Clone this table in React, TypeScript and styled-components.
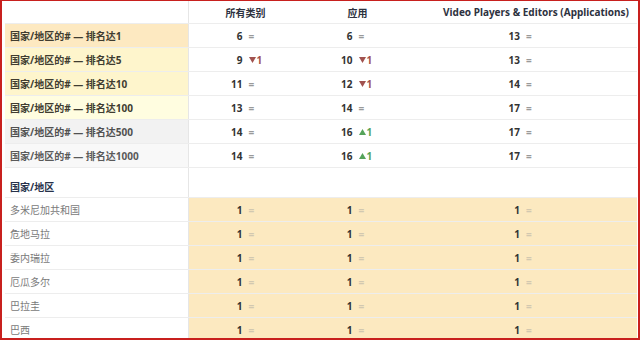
import React from "react";
import styled, { createGlobalStyle } from "styled-components";

const Global = createGlobalStyle`
  html, body { margin: 0; padding: 0; background: #fff; }
  body { font-family: "Noto Sans", "Noto Sans CJK SC", sans-serif; }
`;

const Frame = styled.div`
  box-sizing: border-box;
  width: 640px;
  height: 340px;
  border-style: solid;
  border-color: #c8201e;
  border-width: 1px 2px 2px 2px;
  padding: 0 1px 0 3px;
  overflow: hidden;
  background: #fff;
`;

const Table = styled.div`
  display: flex;
  flex-direction: column;
`;

const Row = styled.div<{ $h?: number }>`
  box-sizing: border-box;
  display: grid;
  grid-template-columns: 184px 113px 107px 1fr;
  height: ${(p) => p.$h ?? 24}px;
  border-bottom: 1px solid #ededed;
`;

const HeadCell = styled.div<{ $shift?: number }>`
  display: flex;
  align-items: center;
  justify-content: center;
  padding-left: ${(p) => p.$shift ?? 0}px;
  font-size: 10px;
  font-weight: 700;
  color: #2d3240;
  white-space: nowrap;
`;

const LabelCell = styled.div<{ $bg?: string; $color?: string; $bold?: boolean }>`
  display: flex;
  align-items: center;
  padding-left: 5px;
  background: ${(p) => p.$bg ?? "#fff"};
  border-right: 1px solid #e6e6e6;
  font-size: 10px;
  font-weight: ${(p) => (p.$bold ? 700 : 400)};
  color: ${(p) => p.$color ?? "#333"};
  white-space: nowrap;
`;

const SectionLabel = styled(LabelCell)`
  padding-bottom: 3px;
  align-items: flex-end;
`;

const ValueCell = styled.div<{ $bg?: string }>`
  display: grid;
  grid-template-columns: 1fr 1fr;
  column-gap: 6px;
  align-items: center;
  background: ${(p) => p.$bg ?? "transparent"};
  font-size: 10px;
`;

const Num = styled.span`
  text-align: right;
  font-weight: 700;
  color: #333;
`;

const Delta = styled.span<{ $tone: "same" | "down" | "up" | "faint" }>`
  display: inline-flex;
  align-items: center;
  gap: 1px;
  font-weight: 700;
  color: ${(p) =>
    p.$tone === "down"
      ? "#a1524f"
      : p.$tone === "up"
      ? "#55a35a"
      : p.$tone === "faint"
      ? "#d2c8b0"
      : "#9a9a9a"};
`;

type D = "=" | "-1" | "+1";

const Tri = ({ up }: { up: boolean }) => (
  <svg width="7" height="6" viewBox="0 0 7 6">
    <path d={up ? "M3.5 0 L7 6 L0 6 Z" : "M0 0 L7 0 L3.5 6 Z"} fill="currentColor" />
  </svg>
);

const Value = ({ n, d, faint, bg }: { n: number; d: D; faint?: boolean; bg?: string }) => {
  const tone = d === "=" ? (faint ? "faint" : "same") : d === "-1" ? "down" : "up";
  return (
    <ValueCell $bg={bg}>
      <Num>{n}</Num>
      <Delta $tone={tone}>
        {d === "=" ? "=" : (
          <>
            <Tri up={d === "+1"} />1
          </>
        )}
      </Delta>
    </ValueCell>
  );
};

const ranks: { label: string; bg: string; color: string; vals: [number, D][] }[] = [
  { label: "国家/地区的# — 排名达1", bg: "#fde9c1", color: "#403c30", vals: [[6, "="], [6, "="], [13, "="]] },
  { label: "国家/地区的# — 排名达5", bg: "#fef5cc", color: "#403c30", vals: [[9, "-1"], [10, "-1"], [13, "="]] },
  { label: "国家/地区的# — 排名达10", bg: "#fef5cc", color: "#403c30", vals: [[11, "="], [12, "-1"], [14, "="]] },
  { label: "国家/地区的# — 排名达100", bg: "#fffde0", color: "#403c30", vals: [[13, "="], [14, "="], [17, "="]] },
  { label: "国家/地区的# — 排名达500", bg: "#f2f2f2", color: "#505050", vals: [[14, "="], [16, "+1"], [17, "="]] },
  { label: "国家/地区的# — 排名达1000", bg: "#f8f8f8", color: "#5a5a5a", vals: [[14, "="], [16, "+1"], [17, "="]] },
];

const countries = ["多米尼加共和国", "危地马拉", "委内瑞拉", "厄瓜多尔", "巴拉圭", "巴西"];

const CREAM = "#fce9c0";

export default function App() {
  return (
    <>
      <Global />
      <Frame>
        <Table>
          <Row $h={23}>
            <LabelCell />
            <HeadCell>所有类别</HeadCell>
            <HeadCell $shift={4}>应用</HeadCell>
            <HeadCell $shift={26}>Video Players &amp; Editors (Applications)</HeadCell>
          </Row>
          {ranks.map((r) => (
            <Row key={r.label}>
              <LabelCell $bg={r.bg} $color={r.color} $bold>
                {r.label}
              </LabelCell>
              {r.vals.map(([n, d], i) => (
                <Value key={i} n={n} d={d} />
              ))}
            </Row>
          ))}
          <Row $h={30}>
            <SectionLabel $bold $color="#27314a">
              国家/地区
            </SectionLabel>
            <div />
            <div />
            <div />
          </Row>
          {countries.map((c) => (
            <Row key={c}>
              <LabelCell $color="#7a7a7a">{c}</LabelCell>
              <Value n={1} d="=" faint bg={CREAM} />
              <Value n={1} d="=" faint bg={CREAM} />
              <Value n={1} d="=" faint bg={CREAM} />
            </Row>
          ))}
        </Table>
      </Frame>
    </>
  );
}
